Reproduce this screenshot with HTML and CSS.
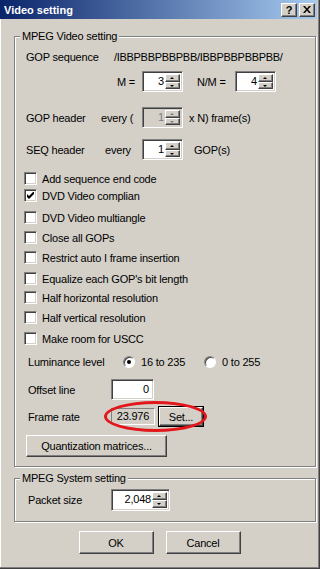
FILE: index.html
```html
<!DOCTYPE html>
<html lang="en">
<head>
    <meta charset="UTF-8">
    <meta name="viewport" content="width=device-width, initial-scale=1.0">
    <title>Video setting</title>
    <link rel="stylesheet" href="styles.css">
</head>
<body>
    <div class="window">
        <div class="titlebar">
            <span class="title">Video setting</span>
            <div class="title-btns">
                <div class="tbtn help">?</div>
                <div class="tbtn close">
                    <svg width="8" height="7" viewBox="0 0 8 7"><path d="M0 0h2l2 2.5L6 0h2L5 3.5 8 7H6L4 4.5 2 7H0l3-3.5z" fill="#000"/></svg>
                </div>
            </div>
        </div>

        <div class="group video">
            <div class="legend">MPEG Video setting</div>

            <div class="row r-gop">
                <span class="lbl gop-lbl">GOP sequence</span>
                <span class="seq">/IBBPBBPBBPBB/IBBPBBPBBPBB/</span>
            </div>

            <div class="row r-m">
                <span class="m-lbl">M =</span>
                <div class="spin w41"><span class="val">3</span><div class="arrows"><div class="up"></div><div class="down"></div></div></div>
                <span class="nm-lbl">N/M =</span>
                <div class="spin w41"><span class="val">4</span><div class="arrows"><div class="up"></div><div class="down"></div></div></div>
            </div>

            <div class="row r-gophdr">
                <span class="lbl hdr-lbl">GOP header</span>
                <span class="every1">every (</span>
                <div class="spin w41 disabled"><span class="val">1</span><div class="arrows"><div class="up"></div><div class="down"></div></div></div>
                <span class="after1">x N) frame(s)</span>
            </div>

            <div class="row r-seq">
                <span class="lbl seq-lbl">SEQ header</span>
                <span class="every2">every</span>
                <div class="spin w41"><span class="val">1</span><div class="arrows"><div class="up"></div><div class="down"></div></div></div>
                <span class="after2">GOP(s)</span>
            </div>

            <div class="check c1"><span class="box"></span>Add sequence end code</div>
            <div class="check c2"><span class="box checked"><svg width="7" height="7" viewBox="0 0 7 7"><path d="M0 2v3l2 2 5-5V-1L2 4z" fill="#000"/></svg></span>DVD Video complian</div>
            <div class="check c3"><span class="box"></span>DVD Video multiangle</div>
            <div class="check c4"><span class="box"></span>Close all GOPs</div>
            <div class="check c5"><span class="box"></span>Restrict auto I frame insertion</div>
            <div class="check c6"><span class="box"></span>Equalize each GOP's bit length</div>
            <div class="check c7"><span class="box"></span>Half horizontal resolution</div>
            <div class="check c8"><span class="box"></span>Half vertical resolution</div>
            <div class="check c9"><span class="box"></span>Make room for USCC</div>

            <div class="row r-lum">
                <span class="lbl2 lum-lbl">Luminance level</span>
                <div class="opt opt1"><span class="radio on"></span>16 to 235</div>
                <div class="opt"><span class="radio"></span>0 to 255</div>
            </div>

            <div class="row r-offset">
                <span class="lbl2 w83">Offset line</span>
                <div class="edit">0</div>
            </div>

            <div class="row r-frame">
                <span class="lbl2 w83">Frame rate</span>
                <div class="static">23.976</div>
                <div class="btn set-btn">Set...</div>
                <div class="mark"></div>
            </div>

            <div class="btn quant-btn">Quantization matrices...</div>
        </div>

        <div class="group system">
            <div class="legend">MPEG System setting</div>
            <div class="row r-packet">
                <span class="lbl2 w83">Packet size</span>
                <div class="spin w59"><span class="val">2,048</span><div class="arrows"><div class="up"></div><div class="down"></div></div></div>
            </div>
        </div>

        <div class="buttons">
            <div class="btn dlg-btn">OK</div>
            <div class="btn dlg-btn">Cancel</div>
        </div>
    </div>
</body>
</html>
```

FILE: styles.css
```css
body {
    margin: 0;
    padding: 0;
    background: #d4d0c8;
    font-family: 'Liberation Sans', Arial, sans-serif;
    font-size: 11px;
    letter-spacing: -0.2px;
    color: #000;
}
.window {
    position: relative;
    width: 320px;
    height: 569px;
    box-sizing: border-box;
    background: #d4d0c8;
    border-right: 1px solid #404040;
    border-bottom: 1px solid #404040;
    box-shadow: inset -1px -1px #808080, inset 1px 0 #fff;
    overflow: hidden;
}
.titlebar {
    height: 19px;
    margin-right: 2px;
    background: linear-gradient(to right, #0a246a, #a6caf0);
    display: flex;
    align-items: center;
    justify-content: space-between;
}
.title {
    color: #fff;
    font-weight: bold;
    font-size: 11px;
    letter-spacing: 0;
    padding-left: 4px;
}
.title-btns {
    display: flex;
    gap: 2px;
    padding-right: 2px;
}
.tbtn {
    width: 14px;
    height: 12px;
    background: #d4d0c8;
    border: 1px solid;
    border-color: #fff #404040 #404040 #fff;
    box-shadow: inset -1px -1px #808080;
    display: flex;
    align-items: center;
    justify-content: center;
    font-weight: bold;
    font-size: 11px;
    line-height: 12px;
}
.group {
    margin-left: 14px;
    width: 291px;
    border: 1px solid #808080;
    box-shadow: inset 1px 1px #fff, 1px 1px #fff;
    padding: 0 0 0 9px;
}
.video {
    margin-top: 17px;
    padding-bottom: 9px;
}
.system {
    margin-top: 11px;
    padding-bottom: 10px;
}
.legend {
    width: fit-content;
    height: 14px;
    line-height: 14px;
    margin: -8px 0 0 -4px;
    padding: 0 2px;
    background: #d4d0c8;
}
.row {
    display: flex;
    align-items: center;
    white-space: nowrap;
}
.lbl {
    margin-left: 2px;
}
.lbl2 {
    margin-left: 4px;
}
.r-gop {
    margin-top: 7px;
    height: 14px;
}
.gop-lbl {
    width: 88px;
}
.seq {
    letter-spacing: -0.3px;
}
.r-m {
    margin-top: 7px;
    height: 21px;
}
.m-lbl {
    margin-left: 93px;
    width: 25px;
}
.nm-lbl {
    margin-left: 14px;
    width: 38px;
}
.r-gophdr {
    margin-top: 15px;
    height: 21px;
}
.hdr-lbl {
    width: 75px;
}
.every1 {
    width: 41px;
}
.after1 {
    margin-left: 6px;
}
.r-seq {
    margin-top: 11px;
    height: 21px;
}
.seq-lbl {
    width: 79px;
}
.every2 {
    width: 37px;
}
.after2 {
    margin-left: 11px;
}

/* spin boxes */
.spin {
    height: 21px;
    box-sizing: border-box;
    background: #fff;
    border: 1px solid;
    border-color: #808080 #fff #fff #808080;
    box-shadow: inset 1px 1px #404040, inset -1px -1px #d4d0c8;
    display: flex;
    align-items: stretch;
    padding: 2px;
}
.w41 { width: 41px; }
.w59 { width: 59px; }
.spin .val {
    flex: 1;
    text-align: right;
    line-height: 15px;
    padding-right: 1px;
}
.spin .arrows {
    width: 15px;
    display: flex;
    flex-direction: column;
}
.arrows .up, .arrows .down {
    flex: 1;
    background: #d4d0c8;
    border: 1px solid;
    border-color: #fff #404040 #404040 #fff;
    box-shadow: inset -1px -1px #808080;
    position: relative;
}
.arrows .up::after, .arrows .down::after {
    content: '';
    position: absolute;
    left: 4px;
    top: 2px;
    border-left: 2px solid transparent;
    border-right: 2px solid transparent;
}
.arrows .up::after {
    border-bottom: 2px solid #000;
}
.arrows .down::after {
    border-top: 2px solid #000;
}
.spin.disabled {
    background: #d4d0c8;
    color: #808080;
}
.spin.disabled .arrows .up::after {
    border-bottom-color: #808080;
}
.spin.disabled .arrows .down::after {
    border-top-color: #808080;
}

/* checkboxes */
.check {
    display: flex;
    align-items: center;
    height: 13px;
    white-space: nowrap;
}
.box {
    width: 13px;
    height: 13px;
    box-sizing: border-box;
    background: #fff;
    border: 1px solid;
    border-color: #808080 #fff #fff #808080;
    box-shadow: inset 1px 1px #404040, inset -1px -1px #d4d0c8;
    margin-right: 5px;
    display: flex;
    align-items: center;
    justify-content: center;
}
.c1 { margin-top: 12px; }
.c2 { margin-top: 4px; }
.c3 { margin-top: 9px; }
.c4 { margin-top: 7px; }
.c5 { margin-top: 7px; }
.c6 { margin-top: 8px; }
.c7 { margin-top: 6px; }
.c8 { margin-top: 7px; }
.c9 { margin-top: 8px; }

/* luminance */
.r-lum {
    margin-top: 9px;
    height: 16px;
}
.lum-lbl {
    width: 95px;
}
.opt {
    display: flex;
    align-items: center;
}
.opt1 {
    width: 81px;
}
.radio {
    width: 12px;
    height: 12px;
    box-sizing: border-box;
    border-radius: 50%;
    background: #fff;
    border: 1px solid;
    border-color: #808080 #fff #fff #808080;
    box-shadow: inset 1px 1px #404040;
    margin-right: 6px;
    position: relative;
}
.radio.on::after {
    content: '';
    position: absolute;
    left: 3px;
    top: 3px;
    width: 4px;
    height: 4px;
    border-radius: 50%;
    background: #000;
}

.w83 {
    width: 83px;
}
.r-offset {
    margin-top: 9px;
    height: 21px;
}
.edit {
    width: 43px;
    height: 21px;
    box-sizing: border-box;
    background: #fff;
    border: 1px solid;
    border-color: #808080 #fff #fff #808080;
    box-shadow: inset 1px 1px #404040, inset -1px -1px #d4d0c8;
    text-align: right;
    line-height: 19px;
    padding-right: 4px;
}
.r-frame {
    position: relative;
    margin-top: 7px;
    height: 19px;
}
.static {
    width: 44px;
    height: 17px;
    box-sizing: border-box;
    border: 1px solid;
    border-color: #808080 #fff #fff #808080;
    text-align: center;
    line-height: 15px;
}
.btn {
    box-sizing: border-box;
    background: #d4d0c8;
    border: 1px solid;
    border-color: #fff #404040 #404040 #fff;
    box-shadow: inset -1px -1px #808080;
    display: flex;
    align-items: center;
    justify-content: center;
    white-space: nowrap;
}
.set-btn {
    margin-left: 4px;
    width: 44px;
    height: 19px;
    outline: 1px solid #000;
}
.mark {
    position: absolute;
    left: 80px;
    top: -6px;
    width: 97px;
    height: 25px;
    border: 3px solid #e3161b;
    border-radius: 50%;
}
.quant-btn {
    margin-top: 9px;
    margin-left: 2px;
    width: 141px;
    height: 22px;
}

.r-packet {
    margin-top: 4px;
    height: 22px;
}
.r-packet .spin {
    height: 22px;
}

.buttons {
    display: flex;
    justify-content: center;
    gap: 12px;
    margin-top: 9px;
}
.dlg-btn {
    width: 75px;
    height: 23px;
}
```
